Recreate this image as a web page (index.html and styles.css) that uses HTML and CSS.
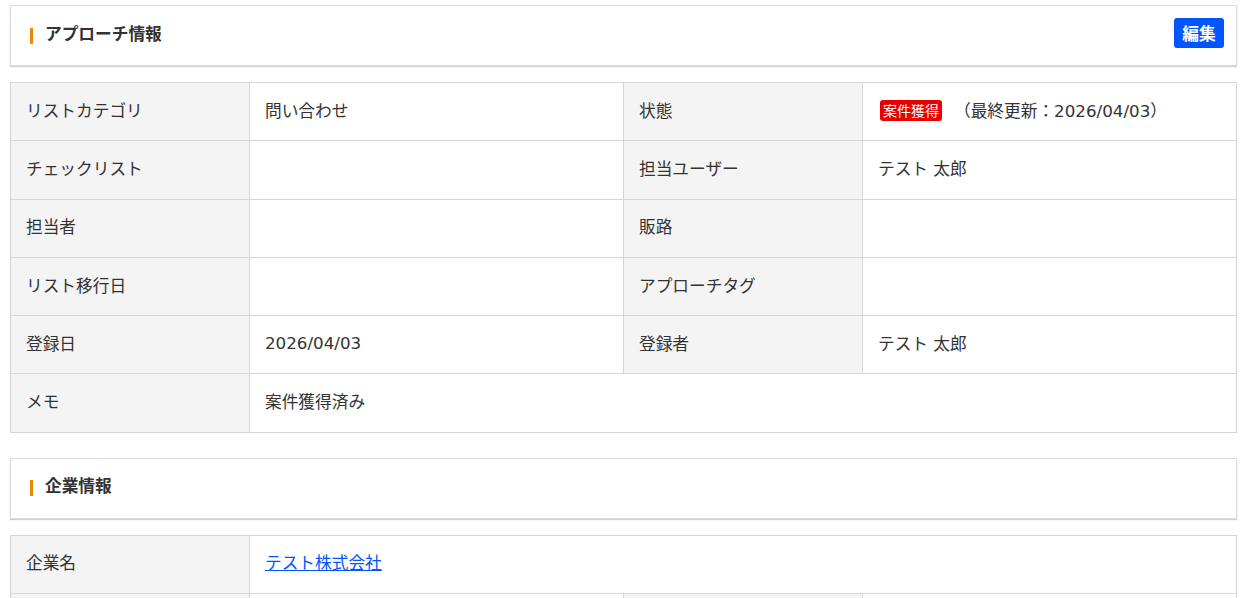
FILE: index.html
```html
<!DOCTYPE html>
<html lang="ja">
<head>
<meta charset="utf-8">
<link rel="stylesheet" href="styles.css">
</head>
<body>
<div class="page">
  <div class="panel">
    <h2 class="panel-title">アプローチ情報</h2>
    <button class="edit-btn">編集</button>
  </div>
  <table class="info">
    <colgroup><col class="c1"><col class="c2"><col class="c3"><col class="c4"></colgroup>
    <tr><th>リストカテゴリ</th><td>問い合わせ</td><th>状態</th><td><span class="badge">案件獲得</span><span class="updated">（最終更新：2026/04/03）</span></td></tr>
    <tr><th>チェックリスト</th><td></td><th>担当ユーザー</th><td>テスト 太郎</td></tr>
    <tr><th>担当者</th><td></td><th>販路</th><td></td></tr>
    <tr><th>リスト移行日</th><td></td><th>アプローチタグ</th><td></td></tr>
    <tr><th>登録日</th><td>2026/04/03</td><th>登録者</th><td>テスト 太郎</td></tr>
    <tr><th>メモ</th><td colspan="3">案件獲得済み</td></tr>
  </table>

  <div class="panel second">
    <h2 class="panel-title">企業情報</h2>
  </div>
  <table class="info">
    <colgroup><col class="c1"><col class="c2"><col class="c3"><col class="c4"></colgroup>
    <tr><th>企業名</th><td colspan="3"><a href="#" class="link">テスト株式会社</a></td></tr>
    <tr><th></th><td></td><th></th><td></td></tr>
  </table>
</div>
</body>
</html>
```
FILE: styles.css
```css
html, body {
  margin: 0;
  padding: 0;
  background: #fff;
}
body {
  font-family: "DejaVu Sans", "Noto Sans CJK JP", sans-serif;
  color: #333;
  font-size: 16.7px;
}
.page {
  padding: 5px 5px 0 10px;
}
.panel {
  border: 1px solid #dcdcdc;
  box-shadow: 0 1px 1px #d0d0d0;
  display: flex;
  align-items: center;
  justify-content: space-between;
  padding: 0 12px 0 19px;
  box-sizing: border-box;
  height: 61px;
}
.panel.second {
  margin-top: 25px;
}
.panel-title {
  margin: 0 0 4px 0;
  font-size: 16.7px;
  font-weight: 700;
  color: #333;
  line-height: 20px;
  display: flex;
  align-items: flex-start;
}
.panel-title::before {
  content: "";
  width: 3px;
  height: 16px;
  margin-top: 4px;
  margin-right: 12px;
  background: #ee8600;
}
.edit-btn {
  background: #0055ff;
  color: #fff;
  border: none;
  border-radius: 3px;
  font-family: "Noto Sans CJK JP", sans-serif;
  font-weight: 700;
  font-size: 16.7px;
  width: 50px;
  height: 30px;
  padding: 0;
  margin-top: -6px;
}
.info {
  margin-top: 16px;
  width: 100%;
  border-collapse: collapse;
  table-layout: fixed;
}
.c1 { width: 239px; }
.c2 { width: 374px; }
.c3 { width: 239px; }
.info th, .info td {
  border: 1px solid #d6d6d6;
  height: 58.3px;
  padding: 0 15px 4px 15px;
  text-align: left;
  font-weight: 400;
  font-size: 16.7px;
  color: #333;
  box-sizing: border-box;
}
.info th {
  background: #f4f4f4;
}
.badge {
  display: inline-block;
  font-family: "Noto Sans CJK JP", sans-serif;
  background: #e60000;
  color: #fff;
  font-size: 14px;
  line-height: 21px;
  padding: 0 3px;
  border-radius: 3px;
  margin-left: 2px;
  margin-right: 12px;
  vertical-align: 1px;
}
.link {
  color: #0055ff;
  text-decoration: underline;
}
```
